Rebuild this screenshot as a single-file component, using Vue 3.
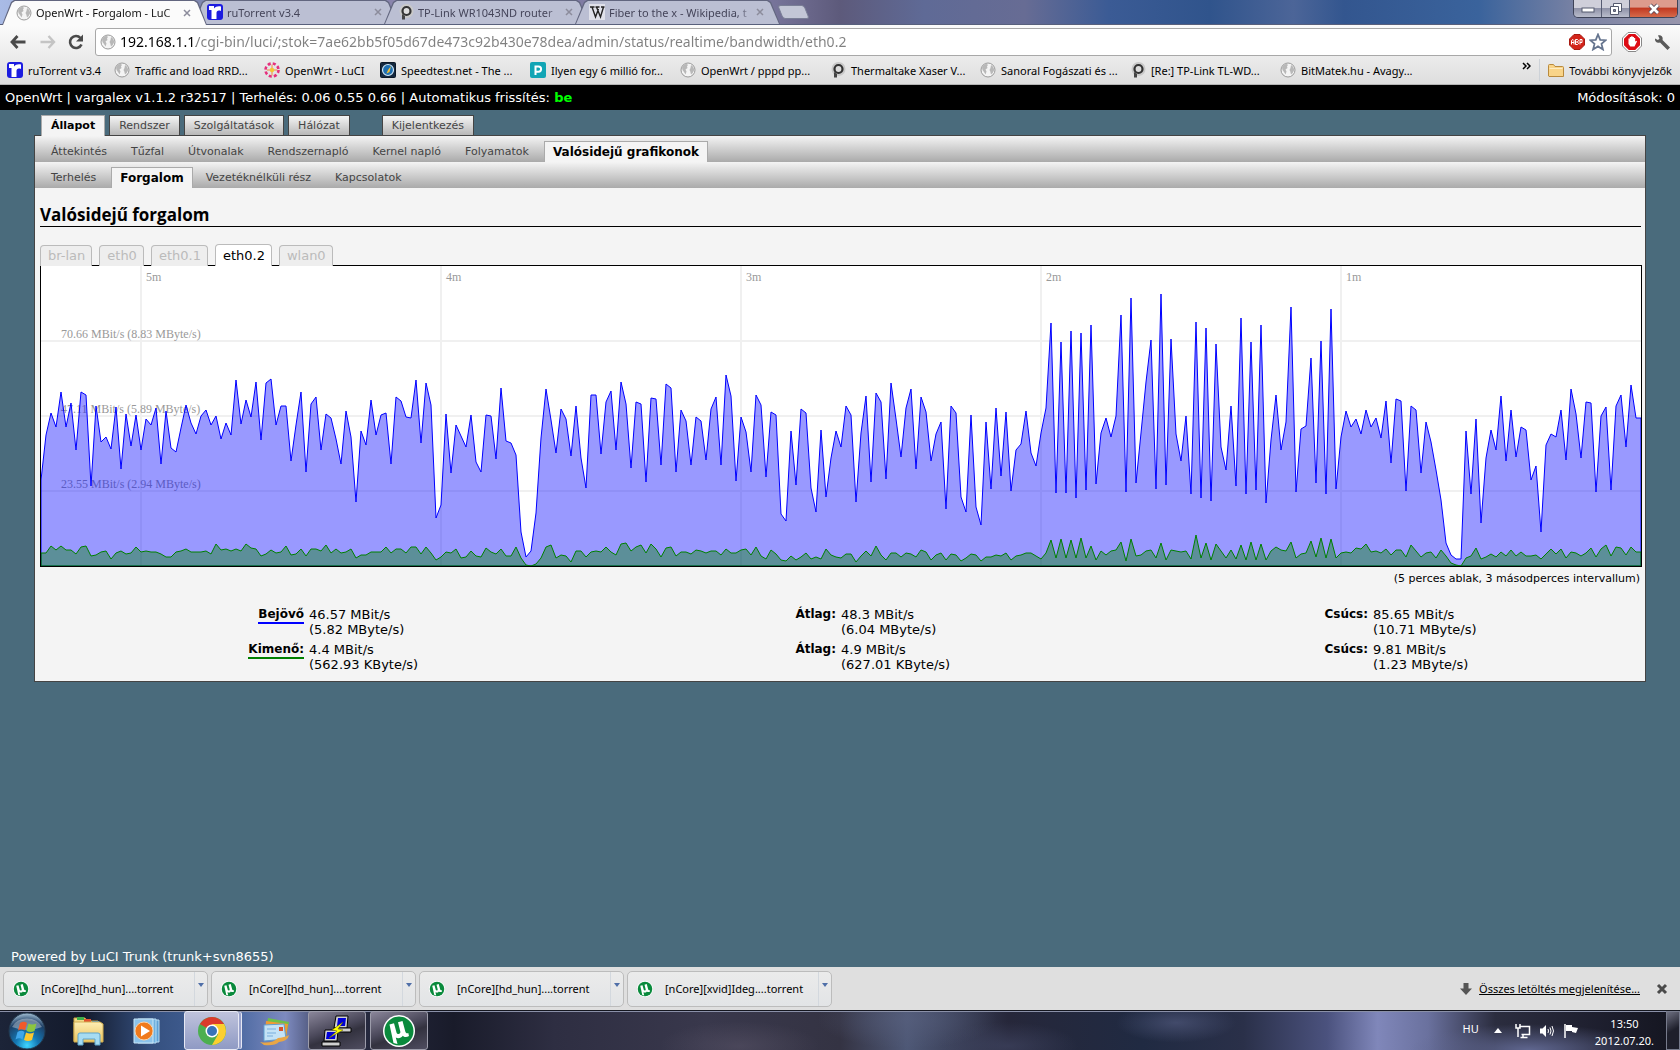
<script setup>
import { ref } from 'vue'

const tabs = [
  { title: 'OpenWrt - Forgalom - LuC', icon: 'globe', active: true },
  { title: 'ruTorrent v3.4', icon: 'rutorrent' },
  { title: 'TP-Link WR1043ND router', icon: 'ring' },
  { title: 'Fiber to the x - Wikipedia, t', icon: 'wiki' },
]

const url = ref('192.168.1.1/cgi-bin/luci/;stok=7ae62bb5f05d67de473c92b430e78dea/admin/status/realtime/bandwidth/eth0.2')

const bookmarks = [
  { title: 'ruTorrent v3.4', icon: 'rutorrent', size: 'short' },
  { title: 'Traffic and load RRD...', icon: 'globe' },
  { title: 'OpenWrt - LuCI', icon: 'luci', size: 'medium' },
  { title: 'Speedtest.net - The ...', icon: 'speed' },
  { title: 'Ilyen egy 6 millió for...', icon: 'pbox' },
  { title: 'OpenWrt / pppd pp...', icon: 'globe' },
  { title: 'Thermaltake Xaser V...', icon: 'ring' },
  { title: 'Sanoral Fogászati és ...', icon: 'globe' },
  { title: '[Re:] TP-Link TL-WD...', icon: 'ring' },
  { title: 'BitMatek.hu - Avagy...', icon: 'globe' },
]

const mainMenu = ['Állapot', 'Rendszer', 'Szolgáltatások', 'Hálózat', 'Kijelentkezés']
const statusMenu = ['Áttekintés', 'Tűzfal', 'Útvonalak', 'Rendszernapló', 'Kernel napló', 'Folyamatok', 'Valósidejű grafikonok']
const graphMenu = ['Terhelés', 'Forgalom', 'Vezetéknélküli rész', 'Kapcsolatok']
const interfaces = ['br-lan', 'eth0', 'eth0.1', 'eth0.2', 'wlan0']

const stats = [
  { label: 'Bejövő', kind: 'rx', now: ['46.57 MBit/s', '(5.82 MByte/s)'], avg: ['48.3 MBit/s', '(6.04 MByte/s)'], peak: ['85.65 MBit/s', '(10.71 MByte/s)'] },
  { label: 'Kimenő:', kind: 'tx', now: ['4.4 MBit/s', '(562.93 KByte/s)'], avg: ['4.9 MBit/s', '(627.01 KByte/s)'], peak: ['9.81 MBit/s', '(1.23 MByte/s)'] },
]

const downloads = ['[nCore][hd_hun]....torrent', '[nCore][hd_hun]....torrent', '[nCore][hd_hun]....torrent', '[nCore][xvid]Ideg....torrent']

// Samples every 3 seconds, stored as thirds of a pixel below the plot's origin (18 = top, 918 = zero).
const rx = [
  660, 525, 458, 502, 397, 500, 428, 570, 397, 405, 677, 438, 545, 532, 567, 442, 627, 462, 557, 466,
  570, 477, 494, 445, 611, 454, 564, 575, 504, 436, 490, 521, 468, 451, 494, 469, 536, 490, 524, 361,
  491, 421, 470, 367, 540, 370, 358, 494, 438, 438, 602, 494, 397, 635, 432, 412, 570, 463, 475, 536,
  611, 454, 530, 725, 514, 554, 421, 524, 465, 459, 611, 412, 423, 470, 474, 361, 548, 370, 436, 773,
  735, 463, 638, 496, 527, 560, 466, 605, 635, 464, 468, 597, 385, 542, 548, 584, 815, 890, 873, 758,
  535, 388, 480, 578, 448, 477, 587, 438, 595, 683, 405, 405, 581, 427, 394, 570, 367, 432, 623, 427,
  432, 665, 414, 417, 614, 373, 384, 635, 451, 484, 614, 471, 484, 599, 448, 412, 614, 346, 408, 662,
  472, 515, 635, 405, 436, 650, 456, 465, 763, 782, 514, 674, 448, 459, 683, 755, 511, 710, 595, 514,
  560, 438, 466, 725, 520, 408, 665, 400, 427, 656, 370, 477, 590, 445, 388, 626, 412, 455, 602, 521,
  487, 746, 438, 459, 710, 755, 466, 740, 794, 487, 686, 445, 647, 457, 692, 571, 551, 454, 580, 617,
  520, 445, 190, 698, 247, 698, 214, 713, 220, 689, 196, 671, 520, 475, 530, 468, 166, 695, 115, 668,
  520, 365, 241, 686, 103, 674, 238, 523, 602, 469, 701, 187, 713, 205, 722, 253, 560, 629, 438, 677,
  175, 701, 247, 689, 196, 728, 540, 406, 570, 487, 142, 695, 508, 497, 295, 668, 244, 701, 148, 686,
  530, 454, 500, 478, 521, 451, 500, 475, 533, 424, 608, 417, 423, 692, 438, 450, 638, 487, 545, 630,
  720, 848, 885, 897, 897, 514, 701, 478, 788, 595, 511, 570, 409, 602, 451, 590, 501, 511, 659, 619,
  815, 554, 523, 532, 451, 599, 388, 462, 593, 426, 430, 695, 468, 442, 689, 438, 406, 560, 376, 473, 473,
]
const tx = [
  878, 878, 858, 869, 858, 870, 871, 881, 860, 857, 887, 885, 877, 874, 896, 879, 874, 882, 879, 862,
  875, 873, 875, 876, 882, 890, 890, 877, 873, 868, 877, 877, 877, 873, 881, 853, 869, 868, 874, 868,
  873, 853, 863, 867, 887, 882, 871, 879, 877, 859, 884, 882, 868, 887, 868, 867, 872, 856, 878, 868,
  879, 877, 868, 895, 886, 885, 877, 877, 877, 862, 878, 868, 867, 878, 861, 861, 881, 862, 879, 899,
  890, 877, 879, 868, 893, 890, 874, 888, 890, 865, 877, 881, 868, 887, 887, 862, 894, 914, 917, 913,
  893, 861, 856, 895, 885, 887, 905, 873, 873, 892, 877, 873, 876, 862, 876, 884, 852, 849, 873, 860,
  856, 878, 853, 868, 890, 865, 861, 887, 877, 877, 881, 870, 872, 879, 874, 873, 884, 868, 879, 878,
  870, 867, 884, 862, 888, 898, 871, 883, 899, 902, 888, 899, 891, 880, 896, 891, 896, 868, 885, 890,
  895, 882, 882, 905, 888, 874, 887, 859, 884, 899, 879, 879, 890, 879, 882, 890, 870, 876, 899, 885,
  879, 899, 882, 885, 902, 894, 882, 884, 902, 890, 890, 885, 887, 880, 899, 888, 885, 879, 879, 887,
  896, 879, 841, 893, 838, 893, 841, 893, 835, 893, 859, 899, 874, 884, 873, 870, 847, 902, 838, 887,
  885, 873, 870, 893, 850, 899, 870, 873, 875, 873, 896, 826, 893, 850, 899, 853, 873, 893, 870, 896,
  856, 899, 847, 899, 853, 899, 873, 861, 870, 873, 847, 893, 882, 879, 844, 890, 835, 893, 838, 893,
  879, 877, 879, 864, 867, 853, 876, 873, 879, 868, 884, 870, 871, 890, 856, 873, 890, 879, 876, 895,
  870, 888, 910, 916, 917, 893, 888, 865, 896, 891, 882, 890, 877, 887, 871, 887, 877, 888, 888, 885,
  896, 882, 868, 881, 868, 893, 876, 879, 887, 879, 865, 890, 867, 856, 887, 861, 864, 884, 862, 876, 876,
]

const area = (samples) =>
  '0,300 ' + samples.map((v, i) => `${i * 5},${Math.round(v / 3 - 6)}`).join(' ') + ' 1600,300'

const timeMarks = [
  { x: 100, text: '5m' }, { x: 400, text: '4m' }, { x: 700, text: '3m' }, { x: 1000, text: '2m' }, { x: 1300, text: '1m' },
]
const rateMarks = [
  { y: 75, text: '70.66 MBit/s (8.83 MByte/s)' },
  { y: 150, text: '47.11 MBit/s (5.89 MByte/s)' },
  { y: 225, text: '23.55 MBit/s (2.94 MByte/s)' },
]
</script>

<template>
  <div class="screen">
    <svg class="defs" width="0" height="0" aria-hidden="true">
      <defs>
        <radialGradient id="orb" cx="50%" cy="90%" r="90%">
          <stop offset="0" stop-color="#3fd6ff" /><stop offset="0.35" stop-color="#1478b4" /><stop offset="0.75" stop-color="#1d3f66" /><stop offset="1" stop-color="#a9c4d8" />
        </radialGradient>
        <linearGradient id="folder" x1="0" y1="0" x2="0" y2="1">
          <stop offset="0" stop-color="#fdeeb4" /><stop offset="1" stop-color="#ecc45e" />
        </linearGradient>
      </defs>
      <symbol id="globe" viewBox="0 0 16 16">
        <circle cx="8" cy="8" r="7" fill="#f4f4f4" stroke="#9a9a9a" />
        <path d="M3 3.500 6 1.800 8 2.800 7 4.500 7.500 6 5.500 7.500 6.500 9.500 5.500 12.500 4 10 2.500 8 2 5.500ZM11 3l2.400 2 .8 3-1.500 3-1.700 1.500-.7-3L9.500 8 10.500 6Z" fill="#b8b8b8" />
      </symbol>
      <symbol id="rutorrent" viewBox="0 0 16 16">
        <rect width="16" height="16" rx="3" fill="#1c1ce0" />
        <path d="M2 2h5v2.500C8.500 2.500 11 2 14 2.500V7C11 6 9.500 7 9.500 9V15H4.500V6H2Z" fill="#fff" />
      </symbol>
      <symbol id="ring" viewBox="0 0 16 16">
        <circle cx="8.500" cy="7" r="7" fill="#c9c9c9" />
        <circle cx="8.500" cy="7" r="4" fill="#ddd" stroke="#333" stroke-width="2.200" />
        <path d="M4 10v5.500h3V12Z" fill="#444" />
      </symbol>
      <symbol id="wiki" viewBox="0 0 16 16">
        <rect width="16" height="16" fill="#e0e1ea" />
        <path d="M1 3h4.500M6.500 3h4M12 3h3.500M3 3l3.500 10L9.500 5M7.500 3l4 10L14.500 3" fill="none" stroke="#222" stroke-width="1.400" />
      </symbol>
      <symbol id="luci" viewBox="0 0 16 16">
        <circle cx="8" cy="8" r="6.500" fill="none" stroke="#e5307c" stroke-width="2.600" stroke-dasharray="3 2.100" />
        <circle cx="8" cy="8" r="2.200" fill="#f6c433" />
        <path d="M8 6V2.500M8 10v3.500M6 8H3M10 8h3" stroke="#f08a3c" />
      </symbol>
      <symbol id="speed" viewBox="0 0 16 16">
        <rect x="0.500" y="0.500" width="15" height="15" rx="1" fill="#14283e" stroke="#0c1826" />
        <circle cx="8" cy="8" r="5.500" fill="#1f6fb0" stroke="#cfe6f5" stroke-width="1.200" />
        <path d="M6.500 11.500 8 8l3-4-1.500 6Z" fill="#f4c234" />
      </symbol>
      <symbol id="pbox" viewBox="0 0 16 16">
        <rect width="16" height="16" rx="2" fill="#12a5b5" />
        <path d="M5.500 13V4.500H8.500a2.600 2.600 0 0 1 0 5.200H6" fill="none" stroke="#fff" stroke-width="2" />
      </symbol>
      <symbol id="utorrent" viewBox="0 0 32 32">
        <circle cx="16" cy="16" r="16" fill="#fff" />
        <circle cx="16" cy="16" r="14.500" fill="#0a8a3c" />
        <path d="M6.500 9.500 11 8.300 13.500 17.500C14.300 20 18 19.300 17.300 16.500L15 7.300 19.500 6 22.300 16.500C22.800 18.300 24 18.600 25.300 18L26 21C24 22.500 21 22.500 19.800 20.800 18.500 23 15 24 12.800 22.500L14.500 29 10.500 28Z" fill="#fff" />
      </symbol>
    </svg>

    <header class="chrome">
      <div class="titlebar">
        <nav class="tabstrip" aria-label="Lapok">
          <div v-for="t in tabs" :key="t.title" class="tab" :class="{ active: t.active }">
            <svg class="ico"><use :href="'#' + t.icon" /></svg>
            <button class="tab-title">{{ t.title }}</button>
            <button class="tab-close" aria-label="Lap bezárása">
              <svg width="8" height="8" viewBox="0 0 8 8"><path d="M1 1l6 6M7 1L1 7" stroke="currentColor" stroke-width="1.500" /></svg>
            </button>
          </div>
          <button class="new-tab" aria-label="Új lap"></button>
        </nav>
        <div class="window-buttons">
          <button class="wb min" aria-label="Kis méret"><svg width="14" height="8" viewBox="0 0 14 8"><rect x="1" y="3" width="12" height="4" fill="#fff" stroke="#555a6e" /></svg></button>
          <button class="wb max" aria-label="Előző méret"><svg width="14" height="14" viewBox="0 0 14 14"><path d="M4.500 1.500h8v8h-8z" fill="#fff" stroke="#555a6e" /><path d="M1.500 4.500h8v8h-8z" fill="#fff" stroke="#555a6e" /><path d="M4.500 7.500h2v2h-2z" fill="#889" stroke="#555a6e" /></svg></button>
          <button class="wb close" aria-label="Bezárás"><svg width="14" height="12" viewBox="0 0 14 12"><path d="M3 2l8 8M11 2l-8 8" stroke="#5d4a58" stroke-width="4.500" /><path d="M3 2l8 8M11 2l-8 8" stroke="#fff" stroke-width="2.600" /></svg></button>
        </div>
      </div>

      <div class="toolbar">
        <button class="tool" aria-label="Vissza"><svg width="16" height="14" viewBox="0 0 16 14"><path d="M7.500 1 2 7l5.500 6M2 7h13.500" fill="none" stroke="#4a4a4a" stroke-width="2.800" /></svg></button>
        <button class="tool" aria-label="Előre"><svg width="16" height="14" viewBox="0 0 16 14"><path d="M8.500 1 14 7l-5.500 6M14 7H.5" fill="none" stroke="#c4c4c4" stroke-width="2.400" /></svg></button>
        <button class="tool" aria-label="Újratöltés"><svg width="16" height="16" viewBox="0 0 16 16"><path d="M13.500 10.500A6 6 0 1 1 12.500 4" fill="none" stroke="#4a4a4a" stroke-width="2.600" /><path d="M15 .5V7.500H8Z" fill="#4a4a4a" /></svg></button>
        <div class="omnibox">
          <svg class="ico"><use href="#globe" /></svg>
          <input v-model="url" class="url" type="text" aria-label="Cím" spellcheck="false" />
          <svg width="16" height="16" viewBox="0 0 16 16"><path d="M5 .5h6L15.500 5v6L11 15.500H5L.5 11V5Z" fill="#d3241a" stroke="#a81b12" /><path d="M2.500 10.500V6.500L4 5.500 5 6.500v4M2.500 8.500H5M6.500 5.500v5h2L9.500 9.500 8.500 8 9.500 6.500 8.500 5.500ZM6.500 8h2M11 10.500v-5h2v3h-2" fill="none" stroke="#fff" /></svg>
          <svg width="18" height="18" viewBox="0 0 18 18"><path d="M9 1.500 11.200 6.800 16.800 7.200 12.500 10.900 13.900 16.400 9 13.400 4.100 16.400 5.500 10.900 1.200 7.200 6.800 6.800Z" fill="#fff" stroke="#66758f" stroke-width="1.800" /></svg>
        </div>
        <button class="tool ext" aria-label="AdBlock"><svg width="20" height="20" viewBox="0 0 20 20"><path d="M6 .5h8L19.500 6v8L14 19.500H6L.5 14V6Z" fill="#fff" stroke="#888" /><path d="M6.800 2h6.400L18 6.800v6.400L13.200 18H6.800L2 13.200V6.800Z" fill="#dd0c14" /><path d="M6.500 9.500V6.500h1.300V5h1.400V4.300h1.400V5H12v1h1.200v3.500l1.300-.7.5.7-2.500 5H8.300L6.500 12Z" fill="#fff" /></svg></button>
        <button class="tool" aria-label="Beállítások"><svg width="17" height="17" viewBox="0 0 17 17"><path d="M1 4.500 4 6 5.500 4.500 4 1.500C7 .5 9.500 3 8.500 6L16 13.500 13.500 16 6 8.500C3 9.500.5 7.500 1 4.500Z" fill="#5a5a5a" /></svg></button>
      </div>

      <nav class="bookmarks" aria-label="Könyvjelzők">
        <a v-for="b in bookmarks" :key="b.title" href="#" class="bookmark" :class="b.size">
          <svg class="ico"><use :href="'#' + b.icon" /></svg><span>{{ b.title }}</span>
        </a>
        <button class="more" aria-label="További elemek"><svg width="9" height="8" viewBox="0 0 9 8"><path d="M1 1l3 3-3 3M5 1l3 3-3 3" fill="none" stroke="#000" stroke-width="1.500" /></svg></button>
        <a href="#" class="bookmark folder">
          <svg width="16" height="13" viewBox="0 0 16 13"><path d="M.5 12V1.500Q.5.500 1.500.5H5.500L7 2.500H14.500Q15.500 2.500 15.500 3.500V12.500H1Z" fill="#f9d488" stroke="#b98a3c" /><path d="M1.500 4.500h13" stroke="#fdecc3" /></svg>
          <span>További könyvjelzők</span>
        </a>
      </nav>
    </header>

    <main class="page">
      <div class="statusline">
        <span>OpenWrt | vargalex v1.1.2 r32517 | Terhelés: 0.06 0.55 0.66 | Automatikus frissítés: <a href="#" class="on">be</a></span>
        <span>Módosítások: 0</span>
      </div>

      <nav class="mainmenu" aria-label="Főmenü">
        <a v-for="(m, i) in mainMenu" :key="m" href="#" :class="{ active: i === 0, logout: i === 4 }">{{ m }}</a>
      </nav>

      <section class="content">
        <nav class="submenu" aria-label="Állapot">
          <a v-for="m in statusMenu" :key="m" href="#" :class="{ active: m === 'Valósidejű grafikonok' }">{{ m }}</a>
        </nav>
        <nav class="submenu" aria-label="Grafikonok">
          <a v-for="m in graphMenu" :key="m" href="#" :class="{ active: m === 'Forgalom' }">{{ m }}</a>
        </nav>

        <div class="body">
          <h2>Valósidejű forgalom</h2>
          <nav class="iftabs" aria-label="Interfészek">
            <a v-for="n in interfaces" :key="n" href="#" :class="{ active: n === 'eth0.2' }">{{ n }}</a>
          </nav>
          <div class="plot">
            <svg class="graph" viewBox="0 0 1600 300" role="img" aria-label="Valósidejű forgalom, eth0.2">
              <g v-for="t in timeMarks" :key="t.text">
                <line :x1="t.x" :x2="t.x" y1="0" y2="300" class="grid" />
                <text :x="t.x + 5" y="15">{{ t.text }}</text>
              </g>
              <g v-for="r in rateMarks" :key="r.y">
                <line x1="0" x2="1600" :y1="r.y" :y2="r.y" class="grid" />
                <text x="20" :y="r.y - 3">{{ r.text }}</text>
              </g>
              <polygon :points="area(rx)" class="rx" />
              <polygon :points="area(tx)" class="tx" />
            </svg>
          </div>
          <p class="scale">(5 perces ablak, 3 másodperces intervallum)</p>

          <table class="stats">
            <tbody>
              <tr v-for="s in stats" :key="s.kind">
                <th scope="row"><span :class="s.kind">{{ s.label }}</span></th>
                <td>{{ s.now[0] }}<br />{{ s.now[1] }}</td>
                <th scope="row">Átlag:</th>
                <td>{{ s.avg[0] }}<br />{{ s.avg[1] }}</td>
                <th scope="row">Csúcs:</th>
                <td>{{ s.peak[0] }}<br />{{ s.peak[1] }}</td>
              </tr>
            </tbody>
          </table>
        </div>
      </section>

      <footer class="powered">Powered by LuCI Trunk (trunk+svn8655)</footer>
    </main>

    <section class="downloads" aria-label="Letöltések">
      <div v-for="(d, i) in downloads" :key="i" class="download">
        <button class="file"><svg class="ico"><use href="#utorrent" /></svg><span>{{ d }}</span></button>
        <button class="drop" aria-label="Műveletek"><svg width="6" height="4" viewBox="0 0 6 4"><path d="M0 0h6L3 4Z" fill="#4f6fa8" /></svg></button>
      </div>
      <div class="all">
        <svg width="12" height="12" viewBox="0 0 12 12"><path d="M3.500 0h5v5.500H12L6 12 0 5.500h3.500Z" fill="#555" /></svg>
        <a href="#">Összes letöltés megjelenítése...</a>
        <button class="shelf-close" aria-label="Bezárás"><svg width="12" height="12" viewBox="0 0 12 12"><path d="M2 2l8 8M10 2l-8 8" stroke="#4a4a4a" stroke-width="3" /></svg></button>
      </div>
    </section>

    <footer class="taskbar">
      <button class="start" aria-label="Start">
        <svg width="38" height="38" viewBox="0 0 38 38">
          <circle cx="19" cy="19" r="18" fill="url(#orb)" stroke="#22394e" />
          <path d="M4 15a16 13 0 0 1 30 0q-15 6-30 0Z" fill="#fff" opacity="0.35" />
          <path d="M12 11q4-2.500 7 0l-2 7.500q-3-2.500-7 0Z" fill="#f0592a" />
          <path d="M20.500 11.500q3.500 2 8 0l-2 7.500q-4 2-8 0Z" fill="#8cc63f" />
          <path d="M9.500 20q4-2.500 7 0l-2 7.500q-3-2.500-7 0Z" fill="#3fa6ea" />
          <path d="M18 20.500q4 2 8 0l-2 7.500q-4 2-8 0Z" fill="#fdc82f" />
        </svg>
      </button>
      <button class="task" aria-label="Intéző">
        <svg width="34" height="32" viewBox="0 0 34 32">
          <path d="M2 3h11l2 3h11l1 20H2Z" fill="#f3da88" stroke="#c9a545" />
          <path d="M5 2h7v3H5z" fill="#3fae49" /><path d="M12 4h7v3h-7z" fill="#e2542f" /><path d="M20 6h7v3h-7z" fill="#3c9be8" />
          <path d="M2 7h26l3 2v18H2Z" fill="url(#folder)" stroke="#d1ad50" />
          <path d="M6 30V20q0-2 2-2h18q2 0 2 2v10h-5v-6H11v6Z" fill="#a6dcf2" stroke="#5fa5cb" />
        </svg>
      </button>
      <button class="task" aria-label="Médialejátszó">
        <svg width="28" height="28" viewBox="0 0 28 28">
          <path d="M8 3h18v22H8z" fill="#5ea2d6" stroke="#b9dcf3" /><path d="M5 2h18v24H5z" fill="#6eb1e0" stroke="#b9dcf3" /><path d="M1 2h19v24H1z" fill="#8cc3ea" stroke="#c9e6f7" />
          <circle cx="11" cy="14" r="9" fill="#f07a1c" stroke="#fbd2a8" /><path d="M8 8.500 17 14 8 19.500Z" fill="#fff" />
        </svg>
      </button>
      <button class="task open lit" aria-label="Chrome">
        <svg width="28" height="28" viewBox="0 0 28 28">
          <circle cx="14" cy="14" r="14" fill="#4caf50" />
          <path d="M14 14 1.900 7A14 14 0 0 1 26.100 7Z" fill="#db3a2c" />
          <path d="M14 7H26.100A14 14 0 0 1 14 28L20 17.500Z" fill="#fbcf2f" />
          <circle cx="14" cy="14" r="6.500" fill="#fff" /><circle cx="14" cy="14" r="5" fill="#3873b8" />
        </svg>
      </button>
      <button class="task" aria-label="Posta">
        <svg width="32" height="30" viewBox="0 0 32 30">
          <path d="M9 2 30 6 27 20 7 15Z" fill="#6ec04a" /><path d="M7 5 29 8 27 22 6 18Z" fill="#f09a36" />
          <path d="M5 9 25 8 27 23 5 25Z" fill="#c4e2f6" stroke="#5f9fd0" /><path d="M8 13h9M8 17h9M8 20h6" stroke="#79aede" /><path d="M20 11h4v4h-4z" fill="#d9532c" />
          <path d="M1 26q12 2 18-4 8-1 11-3-1 6-10 7-4 4-15 3Z" fill="#e8a646" />
        </svg>
      </button>
      <button class="task open putty" aria-label="PuTTY">
        <svg width="32" height="32" viewBox="0 0 32 32">
          <path d="M15 1h12l-1 12H13Z" fill="#d0d0d0" stroke="#000" /><path d="M17 3h8l-1 8h-8Z" fill="#0000d8" /><path d="M13 13h17v4H12Z" fill="#d0d0d0" stroke="#000" />
          <path d="M4 15h13l-1 11H3Z" fill="#d0d0d0" stroke="#000" /><path d="M6 17h9l-1 7H5Z" fill="#0000d8" /><path d="M1 27h18v4H1Z" fill="#d0d0d0" stroke="#000" />
          <path d="M22 7 11 15l5 1-8 7 14-8-5-1Z" fill="#ff0" stroke="#5c5c00" stroke-width="0.500" />
        </svg>
      </button>
      <button class="task open" aria-label="µTorrent"><svg width="32" height="32"><use href="#utorrent" /></svg></button>

      <div class="tray">
        <span class="lang">HU</span>
        <svg class="up" width="8" height="5" viewBox="0 0 8 5"><path d="M4 0 8 5H0Z" fill="#fff" /></svg>
        <svg width="16" height="16" viewBox="0 0 16 16"><path d="M4.500 3.500h10v8h-8M8 12v2.500M5.500 14.500h7" fill="none" stroke="#fff" stroke-width="1.500" /><path d="M1 1v4h4V1M3 5v9" fill="none" stroke="#fff" stroke-width="1.500" /></svg>
        <svg width="16" height="16" viewBox="0 0 16 16"><path d="M1 5.500h2.500L7 2v12L3.500 10.500H1Z" fill="#fff" /><path d="M9 6q1 2 0 4M11 4.500q2 3.500 0 7M13 3q3 5 0 10" fill="none" stroke="#fff" /></svg>
        <svg width="16" height="16" viewBox="0 0 16 16"><path d="M2 1v14" stroke="#fff" stroke-width="1.500" /><path d="M3 2h6v2l6 1-2 5-4-1V8H3Z" fill="#fff" /></svg>
        <time class="clock"><span>13:50</span><span>2012.07.20.</span></time>
        <button class="desktop" aria-label="Asztal megjelenítése"></button>
      </div>
    </footer>
  </div>
</template>

<style>
body { margin: 0; }
</style>

<style scoped>
.screen {
  display: flex;
  flex-direction: column;
  min-height: 100vh;
  background: #4a6b7c;
  font-family: "DejaVu Sans", Verdana, sans-serif;
  font-size: 12px;
  color: #000;
}
.screen *, .screen *::before { box-sizing: border-box; }
.defs { position: absolute; }
button { padding: 0; border: 0; background: none; font: inherit; color: inherit; display: flex; align-items: center; justify-content: center; }
a { color: inherit; text-decoration: none; }
.ico { width: 16px; height: 16px; flex: none; }
.chrome, .downloads, .taskbar { font-family: "Noto Sans", Tahoma, sans-serif; font-size: 11px; }

/* browser frame */
.chrome { background: linear-gradient(#fbfbfb 26px, #dedede); border-bottom: 1px solid #b4b4b4; }
.titlebar {
  display: flex;
  justify-content: space-between;
  height: 25px;
  border-bottom: 1px solid #58607c;
  background: linear-gradient(90deg, #a9bbe6 0, #7f88b0 12%, #8a84ac 24%, #77749a 46%, #5d5a7b 50%, #5f6a96 55%, #676c94 61%, #3b5b95 66%, #30548c 72%, #4c6598 77%, #33568f 80%, #3a639c 88%, #7b83a4 94%, #9795ac 100%);
}
.tabstrip { display: flex; padding-left: 2px; }
.tab {
  position: relative;
  display: flex;
  align-items: center;
  width: 205px;
  height: 24px;
  margin-right: -14px;
  padding: 0 12px 0 14px;
  gap: 4px;
  color: #45455a;
  background: #62667f;
  clip-path: polygon(0 100%, 9px 2px, 12px 0, 193px 0, 196px 2px, 205px 100%);
}
.tab::before {
  content: "";
  position: absolute;
  inset: 1px 1px 0;
  background: #bbbfd3;
  clip-path: polygon(0 100%, 9px 2px, 12px 0, 191px 0, 194px 2px, 203px 100%);
}
.tab > * { position: relative; }
.tab.active { height: 25px; z-index: 1; color: #111; }
.tab.active::before { background: #fbfbfb; }
.tab-title { flex: 1; min-width: 0; justify-content: flex-start; white-space: nowrap; mask-image: linear-gradient(90deg, #000 92%, #0006); }
.tab-close { color: #8c8c9c; padding: 4px; }
.new-tab { width: 27px; height: 14px; margin: 5px 0 0 14px; background: #c3c6d6; border: 1px solid #7a7e96; border-radius: 3px; transform: skewX(22deg); }
.window-buttons { display: flex; height: 18px; margin-right: 2px; border: 1px solid #3e4358; border-top: 0; border-radius: 0 0 5px 5px; overflow: hidden; }
.wb { width: 28px; background: linear-gradient(#cfcfda 45%, #8f92a8 50%, #b9bccb); border-right: 1px solid #565b72; }
.wb.close { width: 47px; border-right: 0; background: linear-gradient(#dd9b8d 40%, #c23a22 50%, #d66a4a); }

.toolbar { display: flex; align-items: center; height: 34px; padding: 0 3px; }
.tool { width: 30px; height: 28px; flex: none; }
.tool:nth-child(3) { margin-left: -2px; }
.omnibox {
  display: flex;
  align-items: center;
  flex: 1;
  height: 28px;
  gap: 4px;
  margin: 0 5px 0 4px;
  padding: 0 4px;
  background: #fff;
  border: 1px solid #a8a8a8;
  border-radius: 3px;
}
.url {
  flex: 1;
  min-width: 0;
  height: 24px;
  padding: 0;
  border: 0;
  outline: 0;
  font: 14px/24px "Noto Sans", Tahoma, sans-serif;
  color: transparent;
  background: linear-gradient(90deg, #000 76px, #808080 76px);
  background-clip: text;
  -webkit-background-clip: text;
}

.bookmarks { display: flex; align-items: center; height: 25px; padding: 0 8px 3px 7px; }
.bookmark { display: flex; align-items: center; gap: 5px; width: 150px; white-space: nowrap; flex: none; }
.bookmark.short { width: 107px; }
.bookmark.medium { width: 116px; }
.bookmark.folder { width: auto; height: 22px; padding-left: 8px; border-left: 1px solid #cdd2d8; }
.more { margin: -8px 8px 0 auto; }

/* router page */
.page { flex: 1; display: flex; flex-direction: column; }
.statusline { display: flex; justify-content: space-between; height: 25px; line-height: 25px; padding: 0 5px; background: #000; color: #fff; font-size: 13px; }
.on { color: #0f0; font-weight: bold; }
.mainmenu { display: flex; gap: 4px; padding: 5px 41px 0; position: relative; font-size: 11px; }
.mainmenu a { height: 20px; line-height: 20px; padding: 0 9px; border: 1px solid #444; border-bottom: 0; background: linear-gradient(#f4f4f4, #b8b8b8); color: #444; }
.mainmenu .active { height: 21px; margin-bottom: -1px; border-color: #aaa; background: #f4f4f4; color: #000; font-weight: bold; z-index: 1; }
.mainmenu .logout { margin-left: 28px; }
.content { margin: 0 34px; border: 1px solid #444; background: #f4f4f4; }
.submenu { display: flex; align-items: flex-end; height: 26px; padding-left: 4px; background: linear-gradient(#f4f4f4, #aaa); font-size: 11px; }
.submenu a { height: 21px; line-height: 20px; padding: 0 11px; border: 1px solid transparent; border-bottom: 0; color: #444; }
.submenu .active { padding: 0 8px; margin: 0 1px 0 3px; border-color: #aaa; background: #f4f4f4; color: #000; font-size: 12px; font-weight: bold; }
.body { padding: 16px 3px 4px 5px; }
h2 { margin: 0 1px 16px 0; padding-bottom: 1px; font: 700 17px/21px "Open Sans", "Trebuchet MS", sans-serif; border-bottom: 1px solid #000; }
.iftabs { display: flex; align-items: flex-end; gap: 7px; height: 23px; position: relative; margin-bottom: -1px; }
.iftabs a { height: 21px; line-height: 20px; padding: 0 6px 0 7px; border: 1px solid #bbb; border-bottom: 0; border-radius: 4px 4px 0 0; background: #eee; color: #bbb; z-index: 1; font-size: 13px; }
.iftabs .active { height: 22px; line-height: 22px; background: #fff; color: #000; }
.plot { border: 1px solid #000; background: #fff; }
.graph { display: block; width: 100%; height: auto; }
.graph text { font: 12px "Liberation Serif", "Times New Roman", serif; fill: #999; }
.grid { stroke: #f0f0f0; stroke-width: 2; }
.rx { fill: rgba(0, 0, 255, 0.4); stroke: #00f; }
.tx { fill: rgba(0, 128, 0, 0.4); stroke: #008000; }
.scale { margin: 4px 2px 20px 0; text-align: right; font-size: 11px; line-height: 16px; }
.stats { width: calc(100% - 6px); table-layout: fixed; border-collapse: collapse; line-height: 15px; }
.stats th { text-align: right; vertical-align: top; padding: 0 2px 5px; }
.stats td { padding: 0 3px 5px; vertical-align: top; font-size: 13px; }
.stats th span { display: inline-block; }
.stats th .rx { border-bottom: 2px solid #00f; }
.stats th .tx { border-bottom: 2px solid #008000; }
.powered { margin-top: auto; padding: 0 11px; line-height: 20px; color: #fff; font-size: 13px; }

/* download shelf */
.downloads { display: flex; align-items: center; gap: 3px; height: 43px; padding: 0 12px 0 3px; background: #dfdfdf; }
.download { display: flex; width: 205px; height: 36px; border: 1px solid #bcbcbc; border-radius: 5px; background: linear-gradient(#ebebeb, #e2e4e6); }
.file { flex: 1; justify-content: flex-start; gap: 12px; padding-left: 9px; white-space: nowrap; }
.drop { width: 13px; padding-bottom: 8px; border-left: 1px solid #d3d8de; }
.all { display: flex; align-items: center; gap: 7px; margin-left: auto; }
.all a { text-decoration: underline; }
.shelf-close { margin-left: 9px; }

/* Windows taskbar */
.taskbar {
  display: flex;
  align-items: stretch;
  height: 40px;
  padding-left: 8px;
  color: #fff;
  border-top: 1px solid #14161f;
  box-shadow: inset 0 1px 0 #8a90a8;
  background:
    radial-gradient(ellipse 90px 30px at 54% 20%, #59617f90, transparent),
    radial-gradient(ellipse 80px 25px at 44% 90%, #5c566a80, transparent),
    radial-gradient(ellipse 70px 24px at 60% 90%, #454b6a90, transparent),
    radial-gradient(ellipse 60px 20px at 70% 30%, #5a628890, transparent),
    radial-gradient(ellipse 120px 26px at 91% 100%, #5f668f, transparent),
    linear-gradient(90deg, #1c2438 0, #131a2c 5%, #35507f 9%, #4a68a0 14%, #7d8abf 17%, #2a2e45 20%, #191b2a 27%, #2e2e42 33%, #39384c 42%, #343343 50%, #4e5876 54%, #26273a 60%, #202a42 68%, #2a3049 74%, #4b527e 79%, #8087ba 82%, #6a719e 85%, #2b2d3f 89%, #1c1d2c 96%, #14151f 100%);
}
.start { width: 38px; }
.task { width: 58px; margin: 0; flex: none; }
.start + .task { margin-left: 14px; }
.task.open { border: 1px solid #9c9caa; border-radius: 3px; background: linear-gradient(160deg, #8a869a 0, #4a485a 45%, #33323f 60%, #4f4d60); }
.task.lit { width: 55px; margin-left: 8px; background: linear-gradient(#bfc3dc, #8f9ac4); border-color: #e6e8f4; box-shadow: 3px 0 0 -1px #9aa3cc, 4px 0 0 -1px #e6e8f4; }
.task.lit + .task { margin-left: 7px; }
.task.putty { margin: 0 4px 0 4px; }
.tray { display: flex; align-items: center; gap: 8px; margin-left: auto; }
.lang { margin: -4px 7px 0 0; }
.up { margin-right: 5px; }
.clock { display: flex; flex-direction: column; align-items: center; line-height: 17px; margin: 0 4px 0 8px; padding-top: 2px; }
.desktop { align-self: stretch; width: 14px; border: 1px solid #777b8c; background: linear-gradient(150deg, #6d6f80, #1e1f2b 50%); }
</style>
